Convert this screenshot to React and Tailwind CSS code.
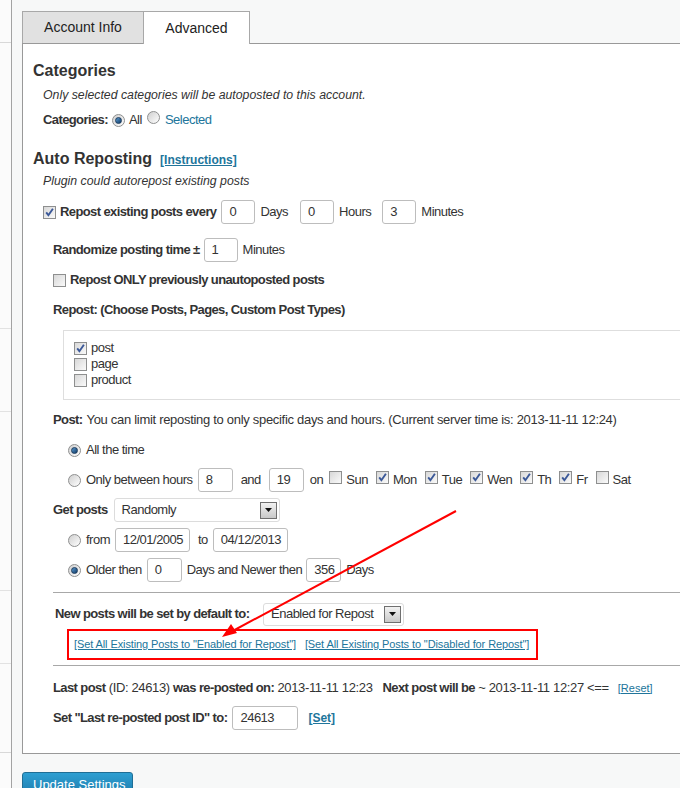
import React from 'react';

function Cb({ checked }) {
  return (
    <span className="relative inline-block w-[13px] h-[13px] shrink-0 border border-[#8e8f8f] bg-linear-to-br from-[#d8d8d8] to-[#fafafa]">
      {checked && (
        <svg className="absolute left-0 top-0" width="11" height="11" viewBox="0 0 11 11">
          <path d="M2.2 5.4 L4.4 8.2 L8.9 1.8" fill="none" stroke="#3b5898" strokeWidth="1.9" />
        </svg>
      )}
    </span>
  );
}

function Radio({ checked }) {
  return (
    <span className="inline-flex items-center justify-center w-[13px] h-[13px] shrink-0 rounded-full border border-[#8e8f8f] bg-linear-to-br from-[#cfcfcf] to-[#ffffff]">
      {checked && (
        <span className="w-[7px] h-[7px] rounded-full bg-linear-to-br from-[#5a9bd0] to-[#123d6a] border border-[#1b3a5c]" />
      )}
    </span>
  );
}

function Field({ value, className }) {
  return (
    <span className={'inline-flex items-center h-[24px] shrink-0 border border-[#bdbdbd] rounded-[3px] bg-white pl-[7px] ' + className}>
      {value}
    </span>
  );
}

function Select({ value, className }) {
  return (
    <span className={'inline-flex items-center justify-between shrink-0 border border-[#dcdcdc] rounded-[3px] bg-white pl-[7px] pr-[2px] ' + className}>
      <span className="whitespace-nowrap">{value}</span>
      <span className="flex items-center justify-center w-[17px] h-[17px] shrink-0 border border-[#707070] bg-linear-to-b from-[#f2f2f2] to-[#c9c9c9]">
        <svg width="7" height="4" viewBox="0 0 7 4">
          <path d="M0 0 L7 0 L3.5 4 Z" fill="#111" />
        </svg>
      </span>
    </span>
  );
}

function B({ children }) {
  return <span className="font-bold tracking-[-0.6px]">{children}</span>;
}

function LinkText({ children, className }) {
  return <span className={'text-[#21759b] underline whitespace-nowrap ' + className}>{children}</span>;
}

export default function App() {
  return (
    <div className="relative flex w-[680px] h-[788px] overflow-hidden bg-[#f7f8f8] font-['Liberation_Sans',Arial,sans-serif] text-[13px] text-[#333]">
      {/* sidebar edge */}
      <div className="w-[12px] shrink-0 border-r border-[#a3a3a3] bg-[#fbfbfb]">
        <div className="h-[43px] border-b border-[#d8d8d8]" />
        <div className="h-[286px] border-b border-[#e2e2e2]" />
        <div className="h-[83px] border-b border-[#e2e2e2]" />
        <div className="h-[179px] border-b border-[#e2e2e2]" />
        <div className="h-[73px] border-b border-[#e2e2e2]" />
        <div className="h-[89px] border-b border-[#d8d8d8]" />
      </div>

      <div className="flex-1 pl-[10px] pt-[11px]">
        {/* tabs */}
        <div className="relative z-10 flex items-start h-[33px] text-[14px] text-[#222]">
          <div className="flex items-center justify-center w-[122px] h-[32px] border border-b-0 border-[#a8a8a8] bg-[#e1e1e1]">
            Account Info
          </div>
          <div className="-ml-px flex items-center justify-center w-[107px] h-[33px] border border-b-0 border-[#a8a8a8] bg-white">
            Advanced
          </div>
        </div>

        <div className="-mt-px w-[700px] border border-[#999] bg-white pl-[10px] pb-[23px] tracking-[-0.5px]">
          <div className="mt-[17px] h-[20px] flex items-center text-[16px] font-bold tracking-normal">Categories</div>
          <div className="mt-[2px] h-[24px] ml-[10px] flex items-center text-[12.3px] italic tracking-normal">
            Only selected categories will be autoposted to this account.
          </div>
          <div className="mt-[1px] h-[24px] ml-[10px] flex items-center">
            <B>Categories:</B>
            <span className="ml-[4px]"><Radio checked /></span>
            <span className="ml-[4px]">All</span>
            <span className="ml-[5px]"><Radio /></span>
            <span className="ml-[5px] text-[#21759b]">Selected</span>
          </div>

          <div className="mt-[15px] h-[20px] flex items-baseline tracking-normal">
            <span className="text-[16px] font-bold">Auto Reposting</span>
            <LinkText className="ml-[8px] text-[12px] font-bold">[Instructions]</LinkText>
          </div>
          <div className="mt-[2px] h-[24px] ml-[10px] flex items-center text-[12.3px] italic tracking-normal">
            Plugin could autorepost existing posts
          </div>

          <div className="mt-[7px] h-[24px] ml-[10px] flex items-center">
            <Cb checked />
            <span className="ml-[4px]"><B>Repost existing posts every</B></span>
            <Field value="0" className="ml-[5px] w-[34px]" />
            <span className="ml-[5px]">Days</span>
            <Field value="0" className="ml-[12px] w-[34px]" />
            <span className="ml-[5px]">Hours</span>
            <Field value="3" className="ml-[11px] w-[34px]" />
            <span className="ml-[5px]">Minutes</span>
          </div>

          <div className="mt-[14px] h-[24px] ml-[20px] flex items-center">
            <B>Randomize posting time ±</B>
            <Field value="1" className="ml-[4px] w-[34px]" />
            <span className="ml-[5px]">Minutes</span>
          </div>

          <div className="mt-[6px] h-[24px] ml-[20px] flex items-center">
            <Cb />
            <span className="ml-[4px]"><B>Repost ONLY previously unautoposted posts</B></span>
          </div>

          <div className="mt-[6px] h-[24px] ml-[20px] flex items-center">
            <B>Repost: (Choose Posts, Pages, Custom Post Types)</B>
          </div>

          <div className="mt-[8px] ml-[30px] border border-[#dedede] pt-[9px] pb-[11px] pl-[10px]">
            {[['post', true], ['page', false], ['product', false]].map(([name, on]) => (
              <div key={name} className="h-[16px] flex items-center">
                <Cb checked={on} />
                <span className="ml-[4px]">{name}</span>
              </div>
            ))}
          </div>

          <div className="mt-[8px] h-[24px] ml-[20px] flex items-center tracking-[-0.3px]">
            <B>Post:</B>
            <span className="ml-[4px]">You can limit reposting to only specific days and hours. (Current server time is: 2013-11-11 12:24)</span>
          </div>

          <div className="mt-[6px] h-[24px] ml-[35px] flex items-center">
            <Radio checked />
            <span className="ml-[5px]">All the time</span>
          </div>

          <div className="mt-[6px] h-[24px] ml-[35px] flex items-center">
            <Radio />
            <span className="ml-[5px]">Only between hours</span>
            <Field value="8" className="ml-[5px] w-[35px]" />
            <span className="ml-[8px]">and</span>
            <Field value="19" className="ml-[8px] w-[35px]" />
            <span className="ml-[6px]">on</span>
            <span className="ml-[6px]"><Cb /></span>
            <span className="ml-[4px]">Sun</span>
            <span className="ml-[8px]"><Cb checked /></span>
            <span className="ml-[4px]">Mon</span>
            <span className="ml-[8px]"><Cb checked /></span>
            <span className="ml-[4px]">Tue</span>
            <span className="ml-[8px]"><Cb checked /></span>
            <span className="ml-[4px]">Wen</span>
            <span className="ml-[8px]"><Cb checked /></span>
            <span className="ml-[4px]">Th</span>
            <span className="ml-[8px]"><Cb checked /></span>
            <span className="ml-[4px]">Fr</span>
            <span className="ml-[8px]"><Cb /></span>
            <span className="ml-[4px]">Sat</span>
          </div>

          <div className="mt-[6px] h-[24px] ml-[20px] flex items-center">
            <B>Get posts</B>
            <Select value="Randomly" className="ml-[6px] w-[166px] h-[24px]" />
          </div>

          <div className="mt-[6px] h-[24px] ml-[35px] flex items-center">
            <Radio />
            <span className="ml-[5px]">from</span>
            <Field value="12/01/2005" className="ml-[5px] w-[75px]" />
            <span className="ml-[8px]">to</span>
            <Field value="04/12/2013" className="ml-[5px] w-[75px]" />
          </div>

          <div className="mt-[6px] h-[24px] ml-[35px] flex items-center">
            <Radio checked />
            <span className="ml-[5px]">Older then</span>
            <Field value="0" className="ml-[5px] w-[35px]" />
            <span className="ml-[5px]">Days and Newer then</span>
            <Field value="356" className="ml-[4px] w-[35px]" />
            <span className="ml-[5px]">Days</span>
          </div>

          <div className="mt-[10px] ml-[20px] h-px bg-[#a8a8a8]" />

          <div className="mt-[9px] h-[24px] ml-[22px] flex items-center">
            <span className="w-[208px] shrink-0"><B>New posts will be set by default to:</B></span>
            <Select value="Enabled for Repost" className="w-[141px] h-[23px]" />
          </div>

          <div className="mt-[3px] ml-[34px] w-[471px] h-[31px] border-2 border-[#ff0000] flex items-center pl-[5px] text-[11px]">
            <LinkText className="tracking-[-0.1px]">[Set All Existing Posts to "Enabled for Repost"]</LinkText>
            <LinkText className="ml-[9px] tracking-[-0.1px]">[Set All Existing Posts to "Disabled for Repost"]</LinkText>
          </div>

          <div className="mt-[5px] ml-[20px] h-px bg-[#a8a8a8]" />

          <div className="mt-[10px] h-[24px] ml-[20px] flex items-center whitespace-pre tracking-[-0.35px]">
            <B>Last post</B>
            <span> (ID: 24613) </span>
            <B>was re-posted on:</B>
            <span> 2013-11-11 12:23</span>
            <span className="ml-[10px]"><B>Next post will be</B></span>
            <span> ~ 2013-11-11 12:27 &lt;==</span>
            <LinkText className="ml-[9px] text-[11px] tracking-normal">[Reset]</LinkText>
          </div>

          <div className="mt-[6px] h-[24px] ml-[20px] flex items-center">
            <B>Set "Last re-posted post ID" to:</B>
            <Field value="24613" className="ml-[5px] w-[66px]" />
            <LinkText className="ml-[10px] text-[12px] font-bold tracking-normal">[Set]</LinkText>
          </div>
        </div>

        <div className="mt-[18px] w-[111px] h-[25px] flex items-center pl-[10px] rounded-[3px] border border-[#1f6e95] bg-linear-to-b from-[#2e9fd2] to-[#1e7bab] text-white text-[13px]">
          Update Settings
        </div>
      </div>

      {/* red annotation arrow */}
      <svg className="pointer-events-none absolute left-0 top-0" width="680" height="788" viewBox="0 0 680 788">
        <line x1="456" y1="511" x2="229" y2="633" stroke="#ff0000" strokeWidth="2" />
        <polygon points="222,637 237,633 231,624" fill="#ff0000" />
      </svg>
    </div>
  );
}
